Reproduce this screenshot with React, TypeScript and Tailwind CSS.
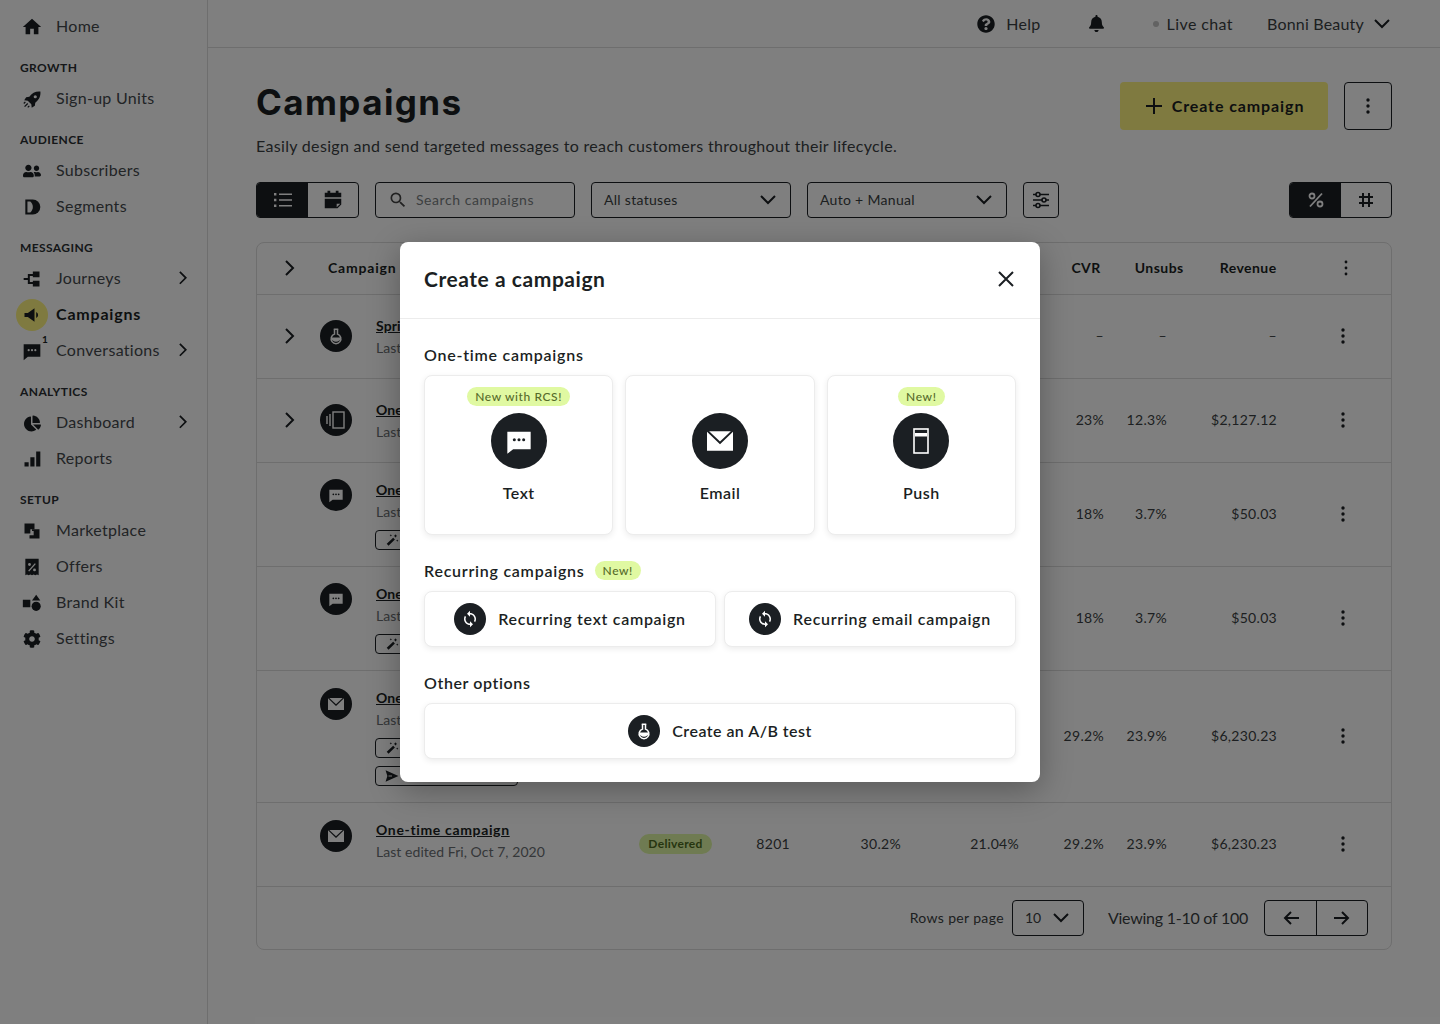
import type { ReactNode } from "react";
import { FaBell, FaChartPie, FaCog, FaQuestionCircle, FaUserFriends } from "react-icons/fa";
import { MdHome, MdSearch, MdSync } from "react-icons/md";

const INK = "#1b1f23";

function Chev({ dir = "right", size = 1 }: { dir?: "right" | "down"; size?: number }) {
  if (dir === "down")
    return (
      <svg width={16 * size} height={10 * size} viewBox="0 0 16 10" fill="none" stroke={INK} strokeWidth={2}>
        <path d="M1 1l7 7 7-7" />
      </svg>
    );
  return (
    <svg width={10 * size} height={16 * size} viewBox="0 0 10 16" fill="none" stroke={INK} strokeWidth={2}>
      <path d="M1 1l7 7-7 7" />
    </svg>
  );
}

function Dots({ gap = 6, r = 1.7 }: { gap?: number; r?: number }) {
  return (
    <svg width="4" height={gap * 2 + 4} viewBox={`0 0 4 ${gap * 2 + 4}`} fill={INK}>
      <circle cx="2" cy="2" r={r} />
      <circle cx="2" cy={gap + 2} r={r} />
      <circle cx="2" cy={gap * 2 + 2} r={r} />
    </svg>
  );
}

function Ico({ children, size = 20, fill = INK }: { children: ReactNode; size?: number; fill?: string }) {
  return (
    <svg width={size} height={size} viewBox="0 0 24 24" fill={fill}>
      {children}
    </svg>
  );
}

const Rocket = () => (
  <Ico size={19}>
    <path d="M22 2c-6-.5-10.500 1.500-14 6.500L4 9l-2.500 4 4.500.5L10.500 18l.5 4.500 4-2.500.500-4C20.500 12.500 22.500 8 22 2z" />
    <circle cx="15.500" cy="8.500" r="2" fill="#fff" />
    <path d="M6 17l-4 4M8 20l-2 2M3 15l-2 2" stroke={INK} strokeWidth="1.600" />
  </Ico>
);
const Segments = () => (
  <Ico>
    <path d="M4 3h9a9 9 0 010 18H4z" />
    <path d="M6.500 5.500H10c2 2 3 4 3 6.500s-1 4.500-3 6.500H6.500z" fill="#fff" />
  </Ico>
);
const Journeys = () => (
  <Ico>
    <path d="M13 3h8v7h-8zM13 14h8v7h-8z" />
    <path d="M7 6h7v2.400H9.400v7.200H14V18H7v-4.800H2v-2.400h5z" />
  </Ico>
);
const Megaphone = () => (
  <Ico>
    <path d="M3 9.500h4L15 4v16l-8-5.500H3z" />
    <path d="M17 8.500a3.800 3.800 0 010 7z" />
  </Ico>
);
const ChatIco = ({ size = 20, fill = INK, dot = "#fff" }: { size?: number; fill?: string; dot?: string }) => (
  <Ico size={size} fill={fill}>
    <path d="M2 4h20v15H7l-5 4z" />
    <circle cx="8" cy="11" r="1.300" fill={dot} />
    <circle cx="12" cy="11" r="1.300" fill={dot} />
    <circle cx="16" cy="11" r="1.300" fill={dot} />
  </Ico>
);
const Bars = () => (
  <Ico>
    <path d="M3 16h5v5H3zM10 10h5v11h-5zM17 3h5v18h-5z" />
  </Ico>
);
const Market = () => (
  <Ico>
    <path d="M3 3h12v7h-5v5H3z" />
    <path d="M12 10h9v11H9v-4h5v-5h-2z" />
  </Ico>
);
const Offers = () => (
  <Ico>
    <path d="M4 2h16v20l-2-1-2 1-2-1-2 1-2-1-2 1-2-1-2 1z" />
    <circle cx="9" cy="9" r="1.700" fill="#fff" />
    <circle cx="15" cy="15.500" r="1.700" fill="#fff" />
    <path d="M8 17l8-9" stroke="#fff" strokeWidth="1.600" />
  </Ico>
);
const Brand = () => (
  <Ico>
    <path d="M1 8h9v9H1zM17 2l5 7H12z" />
    <circle cx="17" cy="16" r="5.500" />
  </Ico>
);
const Calendar = () => (
  <Ico size={22}>
    <path d="M6 2h3v2h6V2h3v2h3v5H3V4h3zM3 10.500h18V17l-4 4H3z" />
    <path d="M16 16h4l-4 4z" fill="#fff" />
  </Ico>
);
const ListIco = ({ color = "#fff" }: { color?: string }) => (
  <svg width="18" height="16" viewBox="0 0 18 16" fill={color}>
    <path d="M0 1h2.400v2.400H0zM0 6.800h2.400v2.400H0zM0 12.600h2.400v2.400H0zM5 1.400h13v1.600H5zM5 7.200h13v1.600H5zM5 13h13v1.600H5z" />
  </svg>
);
const Sliders = () => (
  <svg width="18" height="18" viewBox="0 0 18 18" fill="none" stroke={INK} strokeWidth="1.600">
    <path d="M1 3.500h16M1 9h16M1 14.500h16" />
    <circle cx="6" cy="3.500" r="2" fill="#fff" />
    <circle cx="12" cy="9" r="2" fill="#fff" />
    <circle cx="6" cy="14.500" r="2" fill="#fff" />
  </svg>
);
const PercentIco = () => (
  <svg width="16" height="16" viewBox="0 0 16 16" fill="none" stroke="#fff" strokeWidth="1.800">
    <circle cx="4" cy="4" r="2.500" />
    <circle cx="12" cy="12" r="2.500" />
    <path d="M14 1.500L2 14.500" />
  </svg>
);
const HashIco = () => (
  <svg width="16" height="16" viewBox="0 0 16 16" fill="none" stroke={INK} strokeWidth="2">
    <path d="M5 1v14M11 1v14M1 5h14M1 11h14" />
  </svg>
);
const Wand = () => (
  <svg width="14" height="14" viewBox="0 0 24 24" fill={INK}>
    <path d="M3 18.500L14 8l3 3L6 22zM18 2l1 2 2 1-2 1-1 2-1-2-2-1 2-1zM21 11l.7 1.300L23 13l-1.300.7L21 15l-.7-1.300L19 13l1.300-.7zM10 2l.7 1.300L12 4l-1.300.7L10 6l-.7-1.300L8 4l1.300-.7z" />
  </svg>
);
const Send = () => (
  <svg width="14" height="14" viewBox="0 0 24 24" fill={INK}>
    <path d="M1 2l22 10L1 22l3-10zM6 11v2h6v-2z" />
  </svg>
);
const Flask = ({ size = 18 }: { size?: number }) => (
  <svg width={size} height={size} viewBox="0 0 24 24" fill="none" stroke="#fff" strokeWidth="2">
    <path d="M9 3h6" />
    <path d="M10 3v6.500a6.500 6.500 0 104 0V3" />
    <path d="M6.500 15h11a6 6 0 01-11 0z" fill="#fff" />
  </svg>
);
const MailGlyph = ({ size = 24 }: { size?: number }) => (
  <svg width={size} height={size} viewBox="0 0 24 24" fill="#fff">
    <path d="M0 3.500l12 11.500L24 3.500V21H0z" />
    <path d="M2 3h20L12 12.500z" />
  </svg>
);
const PushGlyph = () => (
  <svg width="18" height="26" viewBox="0 0 18 26" fill="none" stroke="#fff" strokeWidth="1.600">
    <rect x="2" y="1" width="14" height="24" />
    <path d="M3 5h12v3.500H3z" fill="#fff" stroke="none" />
  </svg>
);
const StackGlyph = () => (
  <svg width="20" height="20" viewBox="0 0 20 20" fill="none" stroke="#fff" strokeWidth="1.400">
    <rect x="7" y="2" width="11" height="16" />
    <path d="M4 4v12M1 6v8" />
  </svg>
);

function Circle({ size = 32, children }: { size?: number; children: ReactNode }) {
  return (
    <div className="flex shrink-0 items-center justify-center rounded-full bg-[#1b1f23]" style={{ width: size, height: size }}>
      {children}
    </div>
  );
}

function NavItem({ icon, label, chevron, active, badge }: { icon: ReactNode; label: string; chevron?: boolean; active?: boolean; badge?: boolean }) {
  return (
    <div className="relative flex h-9 items-center">
      <div className={`relative ml-4 flex size-8 shrink-0 items-center justify-center rounded-full ${active ? "bg-[#fff480]" : ""}`}>
        {icon}
        {badge && <span className="absolute left-[26px] -top-[2px] text-[10px] font-bold leading-3 text-[#1b1f23]">1</span>}
      </div>
      <span className={`mb-[2px] ml-2 text-base ${active ? "font-bold tracking-[0.8px] text-[#1b1f23]" : "tracking-[0.3px] text-[#44484c]"}`}>{label}</span>
      {chevron && (
        <span className="absolute left-[179px] top-[10px]">
          <Chev size={0.85} />
        </span>
      )}
    </div>
  );
}

function NavLabel({ children }: { children: string }) {
  return <div className="h-9 pl-5 pt-4 text-xs font-bold leading-[14px] tracking-[0.4px] text-[#2b2f33]">{children}</div>;
}

function Sidebar() {
  return (
    <aside className="h-full w-[208px] shrink-0 border-r border-[#dcdcdc] pt-[9px]">
      <NavItem icon={<MdHome size={22} color={INK} />} label="Home" />
      <NavLabel>GROWTH</NavLabel>
      <NavItem icon={<Rocket />} label="Sign-up Units" />
      <NavLabel>AUDIENCE</NavLabel>
      <NavItem icon={<FaUserFriends size={18} color={INK} />} label="Subscribers" />
      <NavItem icon={<Segments />} label="Segments" />
      <NavLabel>MESSAGING</NavLabel>
      <NavItem icon={<Journeys />} label="Journeys" chevron />
      <NavItem icon={<Megaphone />} label="Campaigns" active />
      <NavItem icon={<ChatIco />} label="Conversations" chevron badge />
      <NavLabel>ANALYTICS</NavLabel>
      <NavItem icon={<FaChartPie size={17} color={INK} />} label="Dashboard" chevron />
      <NavItem icon={<Bars />} label="Reports" />
      <NavLabel>SETUP</NavLabel>
      <NavItem icon={<Market />} label="Marketplace" />
      <NavItem icon={<Offers />} label="Offers" />
      <NavItem icon={<Brand />} label="Brand Kit" />
      <NavItem icon={<FaCog size={18} color={INK} />} label="Settings" />
    </aside>
  );
}

function TopBar() {
  return (
    <header className="flex h-12 items-center justify-end border-b border-[#dcdcdc] pr-[50px] text-base text-[#3a3e42]">
      <FaQuestionCircle size={18} color={INK} />
      <span className="ml-[11px] tracking-[0.3px]">Help</span>
      <span className="ml-[47px]">
        <FaBell size={17} color={INK} />
      </span>
      <span className="ml-[48px] size-[6px] rounded-full bg-[#c4c4c4]" />
      <span className="ml-[8px] tracking-[0.4px]">Live chat</span>
      <span className="ml-[34px] tracking-[0.2px]">Bonni Beauty</span>
      <span className="ml-[10px]">
        <Chev dir="down" />
      </span>
    </header>
  );
}

function Select({ label, width }: { label: string; width: string }) {
  return (
    <div className={`flex h-9 items-center justify-between rounded-[4px] border border-[#1b1f23] pl-3 pr-[14px] text-sm tracking-[0.3px] text-[#3a3e42] ${width}`}>
      <span>{label}</span>
      <Chev dir="down" />
    </div>
  );
}

function Toolbar() {
  return (
    <div className="mt-[26px] flex h-9 items-stretch">
      <div className="flex w-[103px] overflow-hidden rounded-[4px] border border-[#1b1f23]">
        <div className="flex w-[51px] items-center justify-center bg-[#1b1f23]">
          <ListIco />
        </div>
        <div className="flex flex-1 items-center justify-center">
          <Calendar />
        </div>
      </div>
      <div className="ml-4 flex w-[200px] items-center rounded-[4px] border border-[#1b1f23] pl-[12px] text-sm tracking-[0.55px] text-[#7a7e82]">
        <MdSearch size={20} color="#444" />
        <span className="ml-[8px]">Search campaigns</span>
      </div>
      <div className="ml-4">
        <Select label="All statuses" width="w-[200px]" />
      </div>
      <div className="ml-4">
        <Select label="Auto + Manual" width="w-[200px]" />
      </div>
      <div className="ml-4 flex w-9 items-center justify-center rounded-[4px] border border-[#1b1f23]">
        <Sliders />
      </div>
      <div className="ml-auto flex w-[103px] overflow-hidden rounded-[4px] border border-[#1b1f23]">
        <div className="flex w-[51px] items-center justify-center bg-[#1b1f23]">
          <PercentIco />
        </div>
        <div className="flex flex-1 items-center justify-center">
          <HashIco />
        </div>
      </div>
    </div>
  );
}

type Row = {
  h: string;
  chevron?: boolean;
  icon: ReactNode;
  iconPad: string;
  namePad: string;
  name: string;
  sub: string;
  chips?: ("wand" | "send")[];
  delivered?: boolean;
  sent?: string;
  open?: string;
  ctr?: string;
  cvr: string;
  unsubs: string;
  revenue: string;
};

const chat = <ChatIco size={16} fill="#fff" dot={INK} />;
const mail = <MailGlyph size={16} />;

// the modal covers these rows from x=400, so only the visible start of each name is kept
const rows: Row[] = [
  { h: "h-[84px]", chevron: true, icon: <Flask />, iconPad: "pt-[25px]", namePad: "pt-[21px]", name: "Spri", sub: "Last", cvr: "–", unsubs: "–", revenue: "–" },
  { h: "h-[84px]", chevron: true, icon: <StackGlyph />, iconPad: "pt-[25px]", namePad: "pt-[21px]", name: "One", sub: "Last", cvr: "23%", unsubs: "12.3%", revenue: "$2,127.12" },
  { h: "h-[104px]", icon: chat, iconPad: "pt-[16px]", namePad: "pt-[17px]", name: "One", sub: "Last", chips: ["wand"], cvr: "18%", unsubs: "3.7%", revenue: "$50.03" },
  { h: "h-[104px]", icon: chat, iconPad: "pt-[16px]", namePad: "pt-[17px]", name: "One", sub: "Last", chips: ["wand"], cvr: "18%", unsubs: "3.7%", revenue: "$50.03" },
  { h: "h-[132px]", icon: mail, iconPad: "pt-[17px]", namePad: "pt-[17px]", name: "One", sub: "Last", chips: ["wand", "send"], cvr: "29.2%", unsubs: "23.9%", revenue: "$6,230.23" },
  { h: "h-[84px]", icon: mail, iconPad: "pt-[17px]", namePad: "pt-[17px]", name: "One-time campaign", sub: "Last edited Fri, Oct 7, 2020", delivered: true, sent: "8201", open: "30.2%", ctr: "21.04%", cvr: "29.2%", unsubs: "23.9%", revenue: "$6,230.23" },
];

function TableRow({ row }: { row: Row }) {
  return (
    <div className={`flex items-center border-b border-[#dcdcdc] pb-[2px] text-sm tracking-[0.3px] text-[#3a3e42] ${row.h}`}>
      <div className="flex w-[63px] shrink-0 justify-center pl-[3px]">{row.chevron && <Chev />}</div>
      <div className={`w-14 shrink-0 self-start ${row.iconPad}`}>
        <Circle>{row.icon}</Circle>
      </div>
      <div className={`w-[263px] shrink-0 self-start ${row.namePad}`}>
        <div className={`text-sm font-bold leading-5 text-[#1b1f23] underline ${row.name.length < 5 ? "tracking-[0.1px]" : "tracking-[0.65px]"}`}>{row.name}</div>
        <div className="text-sm leading-6 tracking-[0.05px] text-[#6a6e72]">{row.sub}</div>
        {row.chips?.map((c, i) => (
          <div key={c} className={`-ml-px flex h-5 w-[143px] items-center rounded-[4px] border border-[#1b1f23] pl-[9px] ${i === 0 ? "mt-[6px]" : "mt-2"}`}>
            {c === "send" ? <Send /> : <Wand />}
          </div>
        ))}
      </div>
      <div className="w-[100px] shrink-0">
        {row.delivered && (
          <span className="inline-block h-5 w-[73px] rounded-full bg-[#def7a4] text-center text-xs font-bold leading-5 text-[#4d6b1f]">Delivered</span>
        )}
      </div>
      <div className="w-[51px] shrink-0 text-right">{row.sent}</div>
      <div className="w-[111px] shrink-0 text-right">{row.open}</div>
      <div className="w-[118px] shrink-0 text-right">{row.ctr}</div>
      <div className="w-[85px] shrink-0 text-right">{row.cvr}</div>
      <div className="w-[63px] shrink-0 text-right">{row.unsubs}</div>
      <div className="w-[110px] shrink-0 text-right">{row.revenue}</div>
      <div className="flex flex-1 pl-[64px]">
        <Dots />
      </div>
    </div>
  );
}

function Table() {
  return (
    <div className="mt-6 overflow-hidden rounded-lg border border-[#dcdcdc]">
      <div className="flex h-[52px] items-center border-b border-[#dcdcdc] pb-[2px] text-sm font-bold tracking-[0.45px] text-[#1b1f23]">
        <div className="flex w-[63px] shrink-0 justify-center pl-[3px]">
          <Chev />
        </div>
        <span className="ml-2 tracking-[0.8px]">Campaign</span>
        <span className="ml-[675px]">CVR</span>
        <span className="ml-[34px]">Unsubs</span>
        <span className="ml-[36px]">Revenue</span>
        <span className="ml-[67px]">
          <Dots r={1.4} />
        </span>
      </div>
      {rows.map((row, i) => (
        <TableRow key={i} row={row} />
      ))}
      <div className="flex h-[62px] items-center justify-end pr-[23px] text-[#3a3e42]">
        <span className="text-sm tracking-[0.35px]">Rows per page</span>
        <div className="ml-2 flex h-9 w-[72px] items-center justify-between rounded-[4px] border border-[#1b1f23] pl-3 pr-[14px] text-sm">
          <span>10</span>
          <Chev dir="down" />
        </div>
        <span className="ml-6 text-base tracking-[-0.25px]">Viewing 1-10 of 100</span>
        <div className="ml-4 flex h-9 w-[104px] rounded-[4px] border border-[#1b1f23]">
          <div className="flex w-[52px] items-center justify-center border-r border-[#1b1f23]">
            <svg width="16" height="14" viewBox="0 0 16 14" fill="none" stroke={INK} strokeWidth="2">
              <path d="M16 7H2M8 1L2 7l6 6" />
            </svg>
          </div>
          <div className="flex flex-1 items-center justify-center">
            <svg width="16" height="14" viewBox="0 0 16 14" fill="none" stroke={INK} strokeWidth="2">
              <path d="M0 7h14M8 1l6 6-6 6" />
            </svg>
          </div>
        </div>
      </div>
    </div>
  );
}

function Badge({ children }: { children: string }) {
  return <span className="block h-[19px] rounded-full bg-[#e0f9a2] px-2 text-xs font-medium leading-[19px] tracking-[0.6px] text-[#566b2a]">{children}</span>;
}

function BigCard({ label, badge, children }: { label: string; badge?: string; children: ReactNode }) {
  return (
    <div className="relative flex h-[160px] flex-col items-center rounded-lg border border-[#ececec] bg-white pt-[37px] shadow-[0_2px_6px_rgba(0,0,0,0.08)]">
      {badge && (
        <span className="absolute top-[11px]">
          <Badge>{badge}</Badge>
        </span>
      )}
      <Circle size={56}>{children}</Circle>
      <span className="mt-[13px] text-base font-semibold leading-[22px] tracking-[0.5px] text-[#1b1f23]">{label}</span>
    </div>
  );
}

function WideCard({ label, tracking = "tracking-[0.7px]", children }: { label: string; tracking?: string; children: ReactNode }) {
  return (
    <div className={`flex h-14 items-center justify-center gap-3 rounded-lg border border-[#ececec] bg-white text-base font-semibold text-[#1b1f23] shadow-[0_2px_6px_rgba(0,0,0,0.08)] ${tracking}`}>
      <Circle>{children}</Circle>
      {label}
    </div>
  );
}

function Modal() {
  return (
    <div className="absolute left-[400px] top-[242px] h-[540px] w-[640px] overflow-hidden rounded-lg bg-white shadow-[0_8px_32px_rgba(0,0,0,0.3)]">
      <div className="flex h-[77px] items-center justify-between border-b border-[#ececec] pb-[2px] pl-6 pr-[26px]">
        <h2 className="text-[21px] font-bold tracking-[0.55px] text-[#1b1f23]">Create a campaign</h2>
        <svg width="16" height="16" viewBox="0 0 16 16" fill="none" stroke={INK} strokeWidth="2">
          <path d="M1 1l14 14M15 1L1 15" />
        </svg>
      </div>
      <div className="px-6">
        <div className="flex h-[56px] items-end pb-2 text-base font-semibold tracking-[0.75px] text-[#1b1f23]">One-time campaigns</div>
        <div className="grid grid-cols-3 gap-3">
          <BigCard label="Text" badge="New with RCS!">
            <ChatIco size={28} fill="#fff" dot={INK} />
          </BigCard>
          <BigCard label="Email">
            <MailGlyph size={26} />
          </BigCard>
          <BigCard label="Push" badge="New!">
            <PushGlyph />
          </BigCard>
        </div>
        <div className="flex h-[56px] items-end gap-[10px] pb-2 text-base font-semibold tracking-[0.75px] text-[#1b1f23]">
          Recurring campaigns
          <span className="mb-[3px]">
            <Badge>New!</Badge>
          </span>
        </div>
        <div className="grid grid-cols-2 gap-2">
          <WideCard label="Recurring text campaign">
            <MdSync size={18} color="#fff" />
          </WideCard>
          <WideCard label="Recurring email campaign">
            <MdSync size={18} color="#fff" />
          </WideCard>
        </div>
        <div className="flex h-[56px] items-end pb-2 text-base font-semibold tracking-[0.6px] text-[#1b1f23]">Other options</div>
        <WideCard label="Create an A/B test" tracking="tracking-[0.45px]">
          <Flask />
        </WideCard>
      </div>
    </div>
  );
}

export default function App() {
  return (
    <div className="relative flex h-[1024px] w-[1440px] overflow-hidden bg-white font-[Lato,sans-serif]">
      <Sidebar />
      <div className="min-w-0 flex-1">
        <TopBar />
        <main className="px-12 pt-[34px]">
          <div className="flex items-start justify-between">
            <div>
              <h1 className="font-[Inter,sans-serif] text-[35px] font-bold leading-10 tracking-[1.4px] text-[#1b1f23]">Campaigns</h1>
              <p className="mt-[14px] text-base leading-5 tracking-[0.32px] text-[#3a3e42]">
                Easily design and send targeted messages to reach customers throughout their lifecycle.
              </p>
            </div>
            <div className="flex gap-4">
              <div className="flex h-12 w-[208px] items-center justify-center gap-[10px] rounded-[4px] bg-[#fff480] pl-[2px] text-base font-bold tracking-[0.9px] text-[#1b1f23]">
                <svg width="16" height="16" viewBox="0 0 16 16" fill="none" stroke={INK} strokeWidth="2">
                  <path d="M8 0v16M0 8h16" />
                </svg>
                Create campaign
              </div>
              <div className="flex size-12 items-center justify-center rounded-[4px] border border-[#1b1f23]">
                <Dots />
              </div>
            </div>
          </div>
          <Toolbar />
          <Table />
        </main>
      </div>
      <div className="absolute inset-0 bg-black/50" />
      <Modal />
    </div>
  );
}
